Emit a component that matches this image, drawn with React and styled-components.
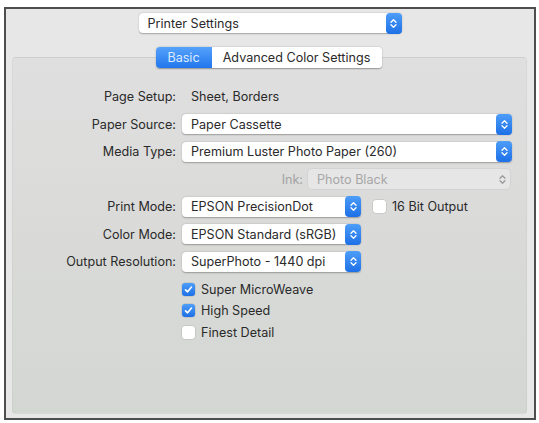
import React from 'react'
import styled, { createGlobalStyle } from 'styled-components'

const Global = createGlobalStyle`
  body {
    margin: 0;
    background: #ffffff;
    font-family: Inter, "Liberation Sans", sans-serif;
  }
`

const Arrows = ({ color = '#fff' }) => (
  <svg width="7" height="11" viewBox="0 0 7 11">
    <path d="M1 4.2 L3.5 1.7 L6 4.2 M1 6.8 L3.5 9.3 L6 6.8" fill="none" stroke={color} strokeWidth="1.3" strokeLinecap="round" strokeLinejoin="round" />
  </svg>
)

const Popup = ({ children, width, disabled }) => (
  <PopupBox $width={width} $disabled={disabled}>
    <PopupText $disabled={disabled}>{children}</PopupText>
    <Stepper $disabled={disabled}>
      <Arrows color={disabled ? '#9a9a9a' : '#fff'} />
    </Stepper>
  </PopupBox>
)

const Check = ({ checked, children }) => (
  <CheckRow>
    <Box $checked={checked}>
      {checked && (
        <svg width="9" height="9" viewBox="0 0 9 9">
          <path d="M1.5 4.8 L3.6 6.8 L7.5 2" fill="none" stroke="#fff" strokeWidth="1.6" strokeLinecap="round" strokeLinejoin="round" />
        </svg>
      )}
    </Box>
    {children}
  </CheckRow>
)

const App = () => {
  return (
    <>
      <Global />
      <Frame>
        <Header>
          <Popup width={263}>Printer Settings</Popup>
        </Header>
        <Tabs>
          <Tab $active>Basic</Tab>
          <Tab>Advanced Color Settings</Tab>
        </Tabs>
        <Panel>
          <Row>
            <Label>Page Setup:</Label>
            <Value>Sheet, Borders</Value>
          </Row>
          <Row>
            <Label>Paper Source:</Label>
            <Popup>Paper Cassette</Popup>
          </Row>
          <Row>
            <Label>Media Type:</Label>
            <Popup>Premium Luster Photo Paper (260)</Popup>
          </Row>
          <Row>
            <span />
            <InkWrap>
              <Label $dim>Ink:</Label>
              <Popup width={202} disabled>Photo Black</Popup>
            </InkWrap>
          </Row>
          <Row>
            <Label>Print Mode:</Label>
            <Inline>
              <Popup width={179}>EPSON PrecisionDot</Popup>
              <Check>16 Bit Output</Check>
            </Inline>
          </Row>
          <Row>
            <Label>Color Mode:</Label>
            <Inline>
              <Popup width={179}>EPSON Standard (sRGB)</Popup>
            </Inline>
          </Row>
          <Row>
            <Label>Output Resolution:</Label>
            <Inline>
              <Popup width={179}>SuperPhoto - 1440 dpi</Popup>
            </Inline>
          </Row>
          <Checks>
            <Check checked>Super MicroWeave</Check>
            <Check checked>High Speed</Check>
            <Check>Finest Detail</Check>
          </Checks>
        </Panel>
      </Frame>
    </>
  )
}

const Frame = styled.div`
  box-sizing: border-box;
  width: 532px;
  height: 413px;
  margin: 7px 0 0 4px;
  border: 2px solid #4e4e4e;
  background: #e7e7e7;
  display: flex;
  flex-direction: column;
  font-size: 12.6px;
  color: #2a2a2a;
`

const Header = styled.div`
  display: flex;
  justify-content: center;
  padding: 4px 0 0 0;
`

const Tabs = styled.div`
  position: relative;
  z-index: 1;
  align-self: center;
  display: flex;
  height: 21px;
  margin: 14px 0 -11px -3px;
  border-radius: 4px;
  background: #fff;
  box-shadow: 0 0.5px 1.5px rgba(0, 0, 0, 0.35);
`

const Tab = styled.div`
  display: flex;
  align-items: center;
  justify-content: center;
  width: ${p => (p.$active ? '56px' : '170px')};
  box-sizing: border-box;
  white-space: nowrap;
  border-radius: ${p => (p.$active ? '4px 0 0 4px' : '0 4px 4px 0')};
  background: ${p => (p.$active ? 'linear-gradient(#55a2fb, #2176ec)' : '#ffffff')};
  color: ${p => (p.$active ? '#dcebff' : '#2a2a2a')};
  font-weight: 400;
`

const Panel = styled.div`
  flex: 1;
  margin: 0 7px 4px 6px;
  padding: 25px 14px 0 0;
  border: 1px solid rgba(0, 0, 0, 0.03);
  border-radius: 4px;
  background: linear-gradient(#dfdfdf, #d9dad8 55%, #d3d7d2);
`

const Row = styled.div`
  display: grid;
  grid-template-columns: 163px 1fr;
  column-gap: 6px;
  height: 27.5px;
  align-items: center;
`

const Label = styled.div`
  text-align: right;
  white-space: nowrap;
  color: ${p => (p.$dim ? '#a3a3a3' : '#2a2a2a')};
`

const Value = styled.div`
  padding-left: 9px;
`

const PopupBox = styled.div`
  display: flex;
  align-items: stretch;
  box-sizing: border-box;
  width: ${p => (p.$width ? `${p.$width}px` : '100%')};
  height: 20px;
  border-radius: 4px;
  background: ${p => (p.$disabled ? '#e6e6e6' : '#ffffff')};
  box-shadow: ${p => (p.$disabled ? '0 0 0 0.5px rgba(0,0,0,0.08)' : '0 0.5px 1.5px rgba(0, 0, 0, 0.3)')};
`

const PopupText = styled.div`
  flex: 1;
  display: flex;
  align-items: center;
  padding-left: 9px;
  white-space: nowrap;
  overflow: hidden;
  color: ${p => (p.$disabled ? '#a6a6a6' : '#2a2a2a')};
`

const Stepper = styled.div`
  display: flex;
  align-items: center;
  justify-content: center;
  width: 16px;
  margin: -0.5px 0;
  border-radius: 4px;
  background: ${p => (p.$disabled ? 'transparent' : 'linear-gradient(#4d9df9, #1d70e6)')};
`

const InkWrap = styled.div`
  display: flex;
  justify-content: flex-end;
  align-items: center;
  gap: 5px;
  padding-right: 2px;
`

const Inline = styled.div`
  display: flex;
  align-items: center;
  gap: 12px;
`

const Checks = styled.div`
  display: flex;
  flex-direction: column;
  margin: 3px 0 0 169px;
`

const CheckRow = styled.div`
  display: flex;
  align-items: center;
  gap: 6px;
  height: 21.5px;
  white-space: nowrap;
`

const Box = styled.div`
  display: flex;
  align-items: center;
  justify-content: center;
  width: 13px;
  height: 13px;
  border-radius: 3px;
  background: ${p => (p.$checked ? 'linear-gradient(#4d9df9, #1d70e6)' : '#ffffff')};
  box-shadow: 0 0 0 0.5px rgba(0, 0, 0, 0.15);
`

export default App
